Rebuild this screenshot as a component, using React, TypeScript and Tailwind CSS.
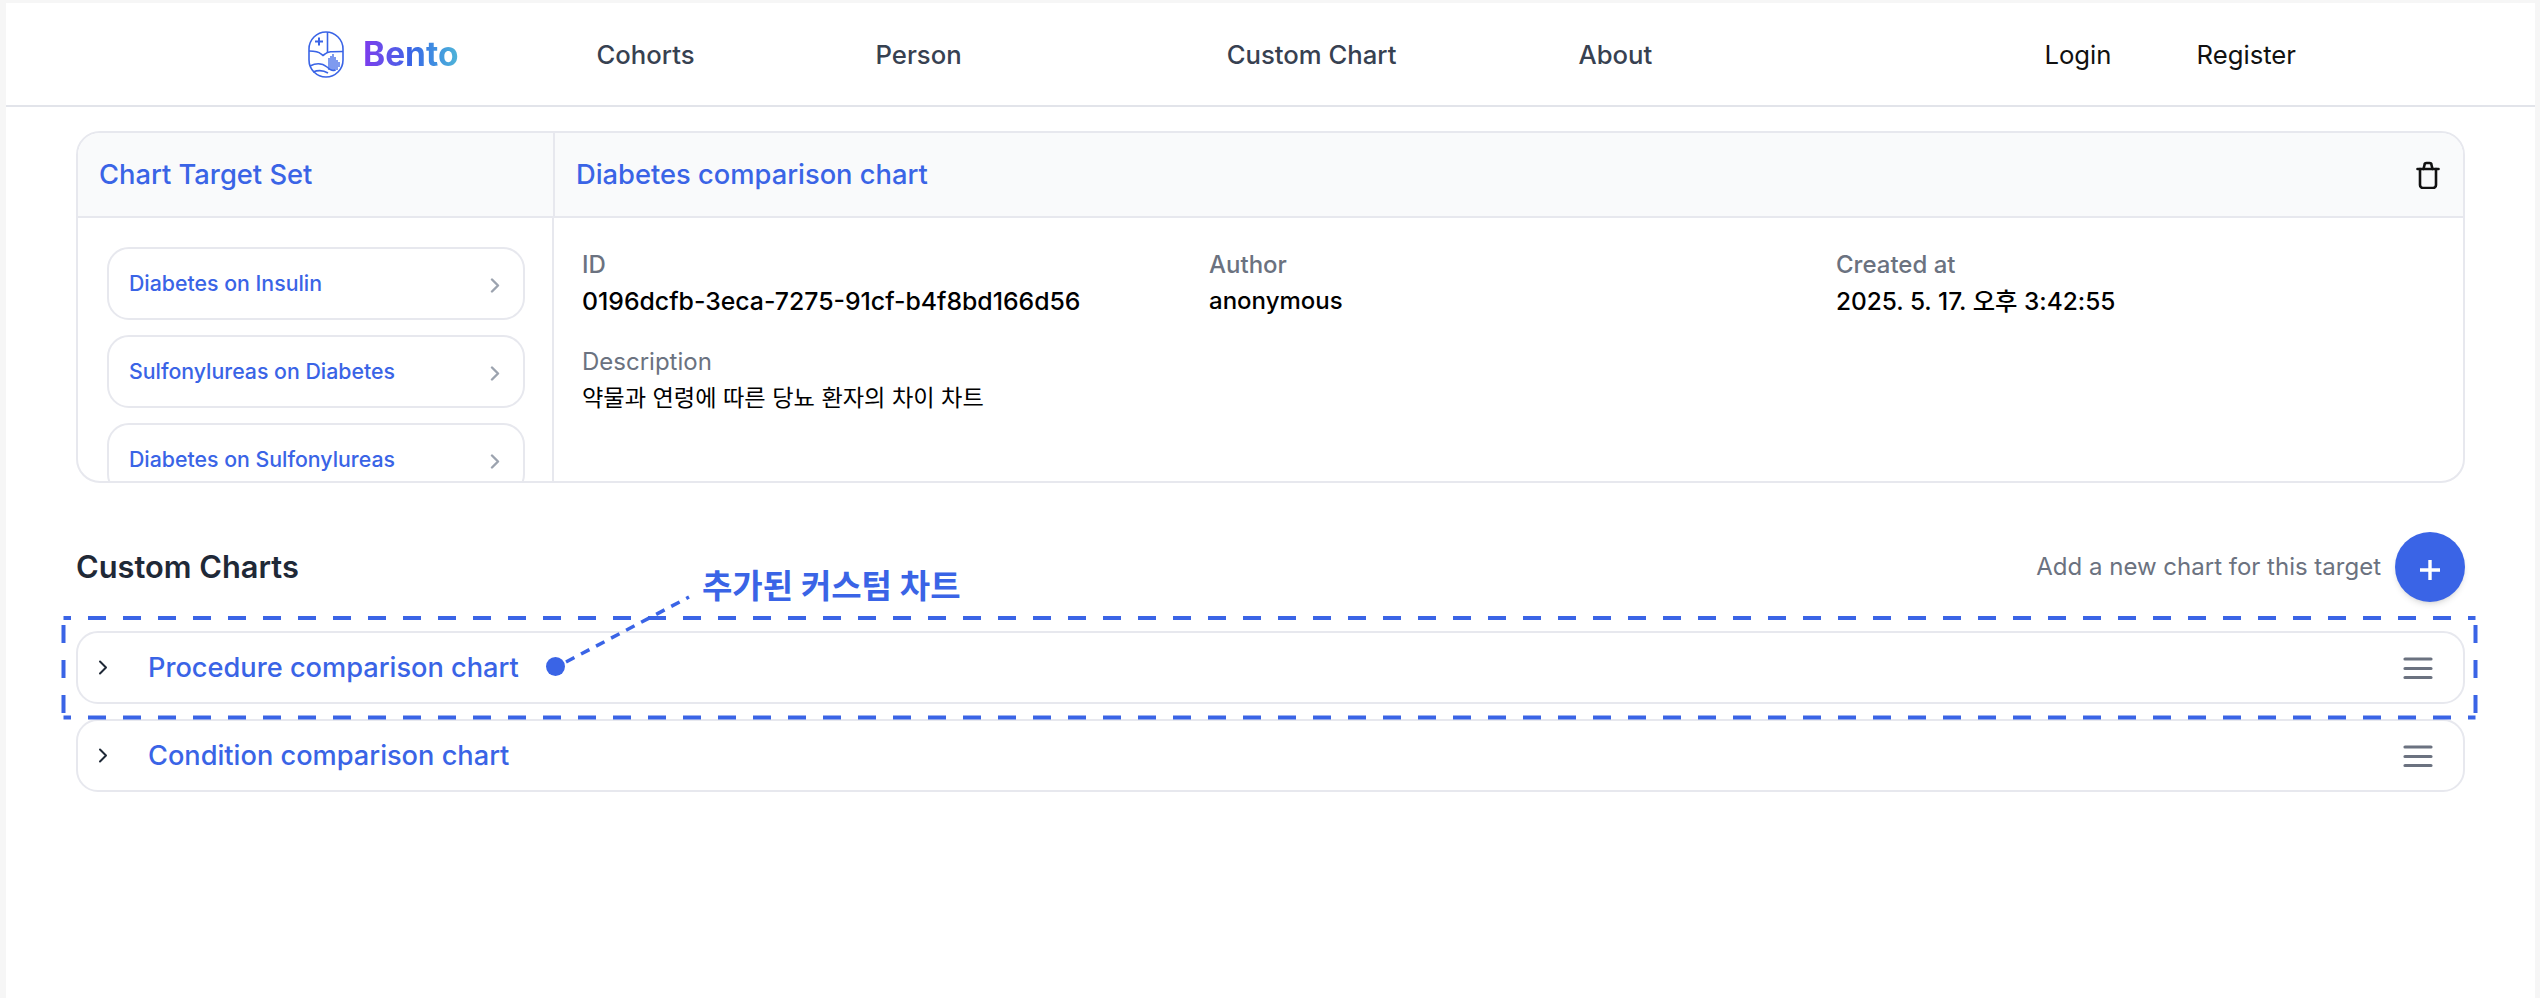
const BLUE = '#3a64e6';

const targets = ['Diabetes on Insulin', 'Sulfonylureas on Diabetes', 'Diabetes on Sulfonylureas'];
const charts = ['Procedure comparison chart', 'Condition comparison chart'];

function Logo() {
  return (
    <svg width="36" height="47" viewBox="0 0 36 47" fill="none" stroke="#3a64e6" strokeWidth="1.6">
      <rect x="1" y="1" width="34" height="45" rx="17" />
      <path d="M19.500 1v21" />
      <path d="M1 20c5 0 9 0 12 3l2 1.500 2-1.500c3-2.500 6-2.500 18-2.500" />
      <path d="M11 6.500v8M7 10.500h8" strokeWidth="2" />
      <path d="M2 35c6-3 12-3 17 1 3 3 6 4 8 3" />
      <path d="M5 41c5-2 10-2 15 1" />
      <path d="M21 39V27M23 39V25M25 40V23M27 40V26M29 39V29M31 36V31" strokeWidth="1.300" />
    </svg>
  );
}

function Chevron({ color, width = 2 }: { color: string; width?: number }) {
  return (
    <svg width="10" height="15" viewBox="0 0 10 15" fill="none" stroke={color} strokeWidth={width} strokeLinecap="round" strokeLinejoin="round">
      <path d="M2 1.500l6 6-6 6" />
    </svg>
  );
}

function TrashIcon() {
  return (
    <svg width="24" height="28" viewBox="0 0 24 28" fill="none" stroke="#111" strokeWidth="2.600" strokeLinejoin="round" strokeLinecap="round">
      <path d="M1.500 8h21" />
      <path d="M4 8v16a3 3 0 003 3h10a3 3 0 003-3V8" />
      <path d="M7.500 8l1-4a2 2 0 012-2h3a2 2 0 012 2l1 4" />
    </svg>
  );
}

function MenuIcon() {
  return (
    <svg width="30" height="24" viewBox="0 0 30 24" fill="none" stroke="#6b7280" strokeWidth="3.200" strokeLinecap="round">
      <path d="M2 3h26M2 12.500h26M2 21.500h26" />
    </svg>
  );
}

function Detail({ label, value, size }: { label: string; value: string; size: string }) {
  return (
    <div className="w-[627px]">
      <div className="text-[24px] leading-[36px] text-[#6b7280]">{label}</div>
      <div className={`leading-[36px] text-black ${size}`}>{value}</div>
    </div>
  );
}

export default function App() {
  return (
    <div
      className="relative h-[998px] overflow-hidden bg-[#f6f6f6] pt-[3px] pl-[6px] pr-[5px]"
      style={{ fontFamily: 'Inter, "Noto Sans CJK KR", sans-serif' }}
    >
      <div className="h-full bg-white">
        <nav className="flex h-[104px] items-center border-b-2 border-[#e2e4ea] pl-[302px] text-[25.700px] font-medium text-[#374151]">
          <div className="flex items-center">
            <Logo />
            <span className="ml-[19px] bg-gradient-to-r from-[#7c3aed] via-[#3a64e6] to-[#4fb4d8] bg-clip-text text-[33.500px] font-bold text-transparent">
              Bento
            </span>
          </div>
          <a className="mt-[3px] ml-[138px]">Cohorts</a>
          <a className="mt-[3px] ml-[181px]">Person</a>
          <a className="mt-[3px] ml-[265px]">Custom Chart</a>
          <a className="mt-[3px] ml-[182px]">About</a>
          <a className="mt-[3px] ml-auto font-normal text-[#111]">Login</a>
          <a className="mt-[3px] mr-[239px] ml-[85px] font-normal text-[#111]">Register</a>
        </nav>

        <main className="px-[70px] pt-[24px]">
          <section className="h-[352px] overflow-hidden rounded-[24px] border-2 border-[#e7e8ee]">
            <header className="flex h-[85px] items-center border-b-2 border-[#e7e8ee] bg-[#f9fafb] text-[27.300px] font-medium text-[#3a64e6]">
              <h2 className="flex h-full w-[477px] items-center border-r-2 border-[#e7e8ee] pt-[2px] pl-[21px]">Chart Target Set</h2>
              <h2 className="pt-[2px] pl-[21px]">Diabetes comparison chart</h2>
              <span className="mr-[23px] ml-auto">
                <TrashIcon />
              </span>
            </header>
            <div className="flex h-[263px]">
              <div className="flex w-[477px] flex-col gap-[15px] overflow-hidden border-r-2 border-[#e7e8ee] pt-[29px] pl-[29px]">
                {targets.map((name) => (
                  <div
                    key={name}
                    className="flex h-[73px] w-[418px] shrink-0 items-center justify-between rounded-[22px] border-2 border-[#e7e8ee] pr-[23px] pl-[20px] text-[21.300px] font-medium text-[#3a64e6]"
                  >
                    {name}
                    <span className="mt-[4px]">
                      <Chevron color="#9ca3af" width={2.4} />
                    </span>
                  </div>
                ))}
              </div>
              <div className="pt-[29px] pl-[28px]">
                <div className="flex font-medium">
                  <Detail label="ID" value="0196dcfb-3eca-7275-91cf-b4f8bd166d56" size="text-[24.800px]" />
                  <Detail label="Author" value="anonymous" size="text-[24px]" />
                  <Detail label="Created at" value="2025. 5. 17. 오후 3:42:55" size="text-[24.400px]" />
                </div>
                <div className="mt-[25px]">
                  <Detail label="Description" value="약물과 연령에 따른 당뇨 환자의 차이 차트" size="text-[23.200px]" />
                </div>
              </div>
            </div>
          </section>

          <div className="mt-[49px] flex h-[70px] items-center justify-between">
            <h3 className="text-[30.800px] font-semibold text-[#1f2937]">Custom Charts</h3>
            <div className="flex items-center gap-[14px]">
              <span className="text-[24px] text-[#6b7280]">Add a new chart for this target</span>
              <button className="flex h-[70px] w-[70px] items-center justify-center rounded-full bg-[#3a64e6] pt-[6px] shadow-md">
                <svg width="20" height="20" viewBox="0 0 20 20" stroke="#fff" strokeWidth="3.400">
                  <path d="M10 0v20M0 10h20" />
                </svg>
              </button>
            </div>
          </div>

          <div className="mt-[29px] flex flex-col gap-[15px]">
            {charts.map((name) => (
              <div key={name} className="flex h-[73px] items-center rounded-[22px] border-2 border-[#e7e8ee] pr-[30px] pl-[20px]">
                <Chevron color="#1f2937" />
                <span className="ml-[40px] pt-[2px] text-[27.200px] font-medium text-[#3a64e6]">{name}</span>
                <span className="ml-auto">
                  <MenuIcon />
                </span>
              </div>
            ))}
          </div>
        </main>
      </div>

      {/* annotation drawn over the page */}
      <svg className="absolute top-0 left-0" width="2540" height="998" fill="none" stroke={BLUE}>
        <g strokeWidth="4" strokeDasharray="18 17">
          <path d="M63.500 618H2475.500" strokeDashoffset="10.500" />
          <path d="M63.500 717.500H2475.500" strokeDashoffset="10.500" />
          <path d="M63.500 618V717.500" strokeDashoffset="28" />
          <path d="M2475.500 618V717.500" strokeDashoffset="28" />
        </g>
        <path d="M566 662L689 597" strokeWidth="3.500" strokeDasharray="9.500 7.500" />
        <circle cx="555.500" cy="666.500" r="9.500" fill={BLUE} stroke="none" />
      </svg>
      <div className="absolute top-[565px] left-[702px] text-[33px] leading-[42px] font-bold text-[#3a64e6]">추가된 커스텀 차트</div>
    </div>
  );
}
